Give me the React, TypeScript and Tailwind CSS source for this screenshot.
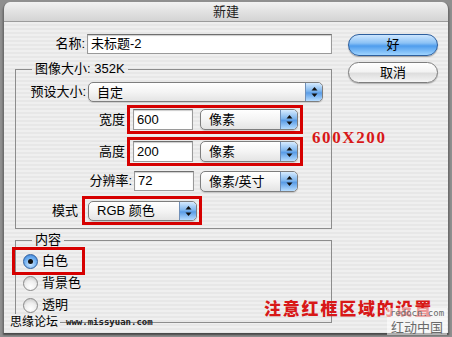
const stripes =
  "bg-[repeating-linear-gradient(180deg,#efefef_0px,#efefef_2px,#e7e7e7_2px,#e7e7e7_4px)]";

function Arrows() {
  return (
    <div className="ml-auto flex h-full w-[17px] items-center justify-center rounded-r-[4px] border-l border-[#6f8fb8] bg-[linear-gradient(180deg,#d6ebff_0%,#7fb6ee_45%,#5a9ce6_55%,#b6dcff_100%)]">
      <svg width="7" height="12" viewBox="0 0 7 12">
        <path d="M3.5 1 L6.5 4.5 L0.5 4.5 Z" fill="#111" />
        <path d="M3.5 11 L6.5 7.5 L0.5 7.5 Z" fill="#111" />
      </svg>
    </div>
  );
}

function Popup({ label, w, h = "h-[21px]" }: { label: string; w: string; h?: string }) {
  return (
    <div
      className={`${w} ${h} flex items-center overflow-hidden rounded-[5px] border border-[#7e7e7e] bg-[linear-gradient(180deg,#ffffff_0%,#f4f4f4_50%,#e4e4e4_100%)] shadow-[0_1px_1px_rgba(0,0,0,0.15)]`}
    >
      <span className="pl-[8px] leading-none">{label}</span>
      <Arrows />
    </div>
  );
}

function Field({ value, w, h = "h-[21px]" }: { value: string; w: string; h?: string }) {
  return (
    <div
      className={`${w} ${h} flex items-center border border-[#9a9a9a] border-t-[#6e6e6e] bg-white pl-[3px] shadow-[inset_0_1px_1px_rgba(0,0,0,0.2)]`}
    >
      {value}
    </div>
  );
}

function Radio({ checked }: { checked?: boolean }) {
  return checked ? (
    <div className="flex h-[15px] w-[15px] items-center justify-center rounded-full border border-[#2f5f9e] bg-[radial-gradient(circle_at_50%_70%,#cfe8ff_0%,#6eaef0_55%,#2f76cf_100%)]">
      <div className="h-[5px] w-[5px] rounded-full bg-[#111]" />
    </div>
  ) : (
    <div className="h-[15px] w-[15px] rounded-full border border-[#8a8a8a] bg-[radial-gradient(circle_at_50%_75%,#ffffff_0%,#eeeeee_50%,#bdbdbd_100%)]" />
  );
}

export default function App() {
  return (
    <div className="relative h-[337px] w-[452px] overflow-hidden bg-[#8f8f8f] px-[3px] pt-[2px] font-['Liberation_Sans','Noto_Sans_CJK_SC',sans-serif] text-[13px] text-black">
      <div className="flex h-[331px] flex-col overflow-hidden rounded-t-[7px] border-x border-[#6d6d6d] shadow-[0_2px_2px_rgba(0,0,0,0.5)]">
        {/* title bar */}
        <div className="flex h-[20px] items-center justify-center border-b border-[#9c9c9c] bg-[linear-gradient(180deg,#f2f2f2_0%,#e2e2e2_50%,#d4d4d4_100%)] text-[#222]">
          新建
        </div>

        <div className={`flex flex-1 pl-[11px] pt-[12px] ${stripes}`}>
          {/* left column */}
          <div className="flex w-[317px] flex-col">
            <div className="flex h-[20px] items-center">
              <div className="w-[72px] pr-[2px] text-right">名称:</div>
              <Field value="未标题-2" w="w-[245px]" h="h-[20px]" />
            </div>

            <fieldset className="mt-[7px] h-[168px] border border-[#8c8c8c]">
              <legend className="ml-[16px] px-[3px] leading-[16px]">图像大小: 352K</legend>

              <div className="mt-[5px] flex h-[20px] items-center">
                <div className="w-[72px] pr-[2px] text-right">预设大小:</div>
                <Popup label="自定" w="w-[235px]" h="h-[20px]" />
              </div>

              <div className="mt-[3px] flex items-center">
                <div className="w-[111px] pr-[2px] text-right">宽度</div>
                <div className="flex h-[29px] w-[176px] items-center border-[3px] border-[#d60000] pl-[3px]">
                  <Field value="600" w="w-[60px]" />
                  <div className="ml-[7px]">
                    <Popup label="像素" w="w-[98px]" />
                  </div>
                </div>
              </div>

              <div className="mt-[3px] flex items-center">
                <div className="w-[111px] pr-[2px] text-right">高度</div>
                <div className="flex h-[29px] w-[176px] items-center border-[3px] border-[#d60000] pl-[3px]">
                  <Field value="200" w="w-[60px]" />
                  <div className="ml-[7px]">
                    <Popup label="像素" w="w-[98px]" />
                  </div>
                </div>
              </div>

              <div className="mt-[5px] flex h-[20px] items-center">
                <div className="w-[118px] pr-[2px] text-right">分辨率:</div>
                <Field value="72" w="w-[60px]" h="h-[20px]" />
                <div className="ml-[6px]">
                  <Popup label="像素/英寸" w="w-[98px]" h="h-[21px]" />
                </div>
              </div>

              <div className="mt-[5px] flex items-center">
                <div className="w-[66px] pr-[4px] text-right">模式</div>
                <div className="flex h-[29px] w-[120px] items-center border-[3px] border-[#d60000] pl-[3px]">
                  <Popup label="RGB 颜色" w="w-[109px]" h="h-[20px]" />
                </div>
              </div>
            </fieldset>

            <fieldset className="mt-[3px] h-[91px] border border-[#8c8c8c]">
              <legend className="ml-[16px] px-[3px] leading-[16px]">内容</legend>
              <div className="-mt-[1px] -ml-[4px] flex h-[28px] w-[73px] items-center gap-[4px] border-[3px] border-[#d60000] pl-[8px]">
                <Radio checked />
                <span>白色</span>
              </div>
              <div className="-mt-[2px] ml-[7px] flex h-[20px] items-center gap-[4px]">
                <Radio />
                <span>背景色</span>
              </div>
              <div className="mt-[2px] ml-[7px] flex h-[20px] items-center gap-[4px]">
                <Radio />
                <span>透明</span>
              </div>
            </fieldset>
          </div>

          {/* buttons */}
          <div className="ml-[16px] flex w-[90px] flex-col">
            <div className="flex h-[22px] items-center justify-center rounded-full border border-[#2d5f9e] bg-[linear-gradient(180deg,#cde6ff_0%,#8cc2f5_40%,#4f9ded_55%,#9fd4ff_100%)] shadow-[0_1px_1px_rgba(0,0,0,0.3)]">
              好
            </div>
            <div className="mt-[6px] flex h-[21px] items-center justify-center rounded-full border border-[#7d7d7d] bg-[linear-gradient(180deg,#ffffff_0%,#f3f3f3_45%,#dedede_55%,#f4f4f4_100%)] shadow-[0_1px_1px_rgba(0,0,0,0.25)]">
              取消
            </div>
          </div>
        </div>
      </div>

      {/* annotations */}
      <div className="absolute left-[312px] top-[125px] font-['Liberation_Serif',serif] text-[17px] font-bold tracking-[1.6px] text-[#d81818]">
        600X200
      </div>
      <div className="absolute left-[264px] top-[295px] font-['Noto_Sans_CJK_SC',sans-serif] text-[17px] font-black tracking-[1.8px] text-[#d81818]">
        注意红框区域的设置
      </div>

      {/* watermarks */}
      <div className="absolute left-[10px] top-[314px] flex items-center bg-[#eeeeee] pr-[2px] text-[12px] leading-[16px]">
        思缘论坛
      </div>
      <div className="absolute left-[66px] top-[317px] font-['DejaVu_Sans_Mono',monospace] text-[9px] font-bold leading-[10px] text-[#222]">
        www.missyuan.com
      </div>
      <div className="absolute left-[387px] top-[308px] flex h-[27px] w-[60px] flex-col items-center bg-[rgba(255,255,255,0.55)] text-[#6a6a6a]">
        <span className="font-['DejaVu_Sans_Mono',monospace] text-[9px] leading-[11px]">redocn.com</span>
        <span className="font-['Noto_Sans_CJK_SC',sans-serif] text-[13px] leading-[15px]">红动中国</span>
      </div>
    </div>
  );
}
